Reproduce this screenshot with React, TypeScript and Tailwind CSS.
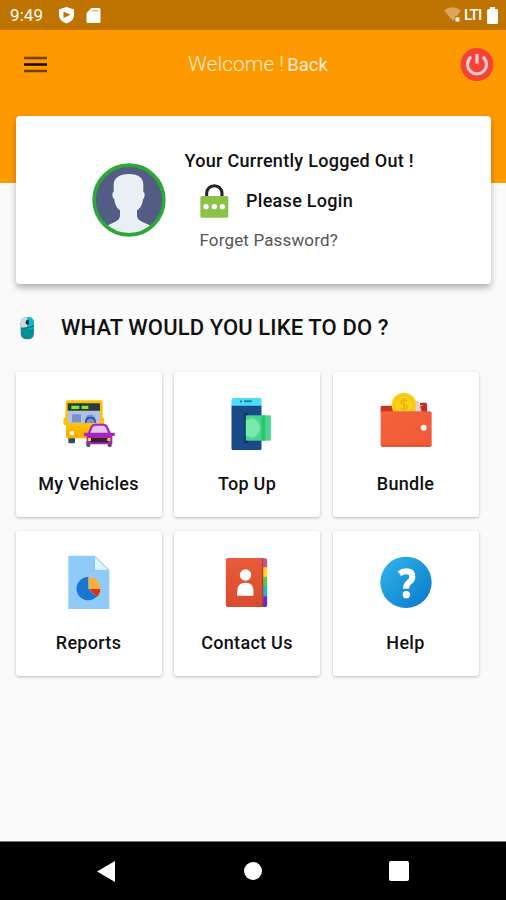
import type { ReactNode } from 'react'

function StatusBar() {
  return (
    <div className="flex h-[30px] items-center bg-[#bf7300] pl-[10px] pr-[8px] text-white">
      <span className="w-[48px] text-[17px] leading-none tracking-[0.100px]">9:49</span>
      <svg width="17" height="18" viewBox="0 0 17 18">
        <path d="M8.500 1 16 3.500v5.500c0 4-3 7-7.500 8.500C4 16 1 13 1 9V3.500z" fill="#fff" />
        <path d="M5.500 5.500v6.500l7-3.200z" fill="#bf7300" />
      </svg>
      <svg className="ml-[11px]" width="15" height="17" viewBox="0 0 15 17">
        <path d="M5.500 1H13q1.500 0 1.500 1.500v12Q14.500 16 13 16H2Q.5 16 .5 14.500V6z" fill="#fff" />
        <path d="M6 3h6v1.500H6z" fill="#d9b680" />
      </svg>
      <svg className="ml-auto" width="18" height="16" viewBox="0 0 18 16">
        <path d="M0 3.500Q8.500-3 17 3.500L9 14z" fill="#dba75c" />
        <path d="M11 9h6v7h-6z" fill="#bf7300" />
        <path d="M11.500 10.500h4v4h-4z" fill="#fff" />
      </svg>
      <span className="ml-[2px] w-[23px] text-[15px] font-medium leading-none tracking-[-0.700px]">LTI</span>
      <svg width="11" height="17" viewBox="0 0 11 17">
        <path d="M3 0h5v2h1.500Q11 2 11 3.500v12Q11 17 9.500 17h-8Q0 17 0 15.500v-12Q0 2 1.500 2H3z" fill="#fff" />
      </svg>
    </div>
  )
}

function Header() {
  return (
    <header className="flex h-[153px] items-start justify-between bg-[#ff9900] pl-[24px] pr-[12px] pt-[17px]">
      <svg className="mt-[9px]" width="23" height="17" viewBox="0 0 23 17">
        <path d="M0 2h23M0 15h23" stroke="#714300" strokeWidth="2.500" />
        <path d="M0 8.500h23" stroke="#120a00" strokeWidth="2.500" />
      </svg>
      <p className="ml-[9px] whitespace-nowrap text-[#ffedd9] leading-[35px]">
        <span className="text-[21px] font-light">Welcome ! </span>
        <span className="-ml-[2px] text-[18.500px]">Back</span>
      </p>
      <svg width="34" height="34" viewBox="0 0 34 34">
        <circle cx="17" cy="17.500" r="16.500" fill="#f44336" />
        <path d="M11.300 9.800a9.500 9.500 0 1 0 11.400 0" fill="none" stroke="#ffcdd2" strokeWidth="3" />
        <path d="M17 7v9.500" stroke="#ffcdd2" strokeWidth="3.200" />
      </svg>
    </header>
  )
}

function Avatar() {
  return (
    <svg width="74" height="74" viewBox="0 0 222 222">
      <circle cx="111" cy="111" r="104" fill="#525c85" />
      <path
        d="M111 33c30 0 43 12 43 34v20c6 1 5 17-1 22-2 18-8 27-18 33v14c0 15 12 20 35 29l8 4c-38 37-98 37-135 1l8-5c22-9 33-14 33-29v-14c-9-6-15-15-17-33-7-5-8-21-2-22V67c0-22 16-34 46-34z"
        fill="#e9eff5"
      />
      <circle cx="111" cy="111" r="104.500" fill="none" stroke="#2ba836" strokeWidth="11" />
    </svg>
  )
}

function LoginCard() {
  return (
    <section className="relative mx-[15.500px] -mt-[67px] flex h-[168px] rounded-[4px] bg-white shadow-[0_4px_6px_rgba(0,0,0,0.28)]">
      <div className="ml-[76.500px] mt-[46.500px]">
        <Avatar />
      </div>
      <div className="ml-[18.500px] mt-[33.500px] whitespace-nowrap">
        <p className="text-[18px] font-medium leading-[22px] tracking-[0.290px] text-[#111]">
          Your Currently Logged Out !
        </p>
        <div className="ml-[15px] mt-[12px] flex h-[35px] items-start">
          <svg width="30" height="35" viewBox="0 0 90 105">
            <path d="M20 42V28a23 23 0 0 1 46 0v14" fill="none" stroke="#23232b" strokeWidth="9" />
            <rect x="1" y="36" width="84" height="65" rx="5" fill="#8bc34a" />
            <circle cx="18" cy="68" r="8" fill="#fff" />
            <circle cx="43" cy="68" r="8" fill="#fff" />
            <circle cx="67" cy="68" r="8" fill="#fff" />
          </svg>
          <p className="ml-[16.500px] mt-[6px] text-[18px] font-medium leading-[22px] tracking-[0.290px] text-[#111]">
            Please Login
          </p>
        </div>
        <p className="ml-[15px] mt-[10.500px] text-[17px] leading-[22px] tracking-[0.150px] text-[#555]">Forget Password?</p>
      </div>
    </section>
  )
}

function Mouse() {
  return (
    <svg width="18" height="27" viewBox="0 0 54 81">
      <path d="M8 28Q8 9 28 9t20 19v29q0 19-20 19T8 57z" fill="#078f98" />
      <path d="M28 9q20 0 20 19v16H28z" fill="#00bcd4" />
      <path d="M28 9Q8 9 8 28v13h20z" fill="#cfd8dc" />
      <path d="M8 41q20 2 40-8v5Q30 46 8 43z" fill="#07727e" />
      <ellipse cx="28" cy="25" rx="5" ry="8" fill="#202c38" />
      <path d="m43 3 10 8" stroke="#e3f6f8" strokeWidth="4" />
    </svg>
  )
}

// icons share a 180 unit box, three units for each pixel
const vehicles = (
  <svg width="60" height="60" viewBox="57 29 180 180">
    <path d="M85 172h20v14q0 3-4 3H89q-4 0-4-3z" fill="#235262" />
    <path d="M83 60h99q6 0 6 7v106H83q-5 0-5-6v-33h-3q-5 0-5-6v-10q0-6 6-6l1-44q0-8 6-8zM187 112h5v21h-5z" fill="#ffc107" />
    <path d="M78 145h70v29H84q-6 0-6-6z" fill="#ffb300" />
    <path d="M83 69h97v22H83z" fill="#263c42" />
    <path d="M94 76h24v10H94zM125 76h20v10h-20z" fill="#76ef32" />
    <path d="M84 92h96v36H84z" fill="#b0c1ed" />
    <path d="M96 102h27v24H96z" fill="#7d91ca" />
    <path d="M136 128v-12q2-13 16-13t15 17v8" fill="#7d91ca" />
    <path d="M137 127q0-15 14-15t15 15" fill="none" stroke="#274cb4" strokeWidth="5" />
    <circle cx="96" cy="158" r="7" fill="#fffde0" />
    <path d="M139 183h12v13q0 4-6 4t-6-4zm64 0h12v13q0 4-6 4t-6-4z" fill="#465663" />
    <path d="M132 157h12l8-19q4-8 12-8h27q9 0 13 9l8 18h12v10h-7v25h-77v-25h-8z" fill="#a526ba" />
    <path d="m151 157 7-16q3-5 9-5h21q7 0 10 6l6 15z" fill="#e5c4f1" />
    <path d="M151 173h54v13h-54z" fill="#3a2032" />
    <path d="M144 173h9v9h-9zm58 0h9v9h-9z" fill="#ffca28" />
  </svg>
)

const topUp = (
  <svg width="60" height="60" viewBox="53.500 29 180 180">
    <path d="M97 74h90v130q0 6-6 6h-78q-6 0-6-6z" fill="#184b88" />
    <path d="M97 76V59q0-6 6-6h78q6 0 6 6v17z" fill="#4dddf8" />
    <path d="M123 60h5v7h-5zm12 0h23v6h-23z" fill="#237fa8" />
    <path d="M136 97h11v91h-11z" fill="#0d315f" />
    <path d="M140 105h75v76h-75z" fill="#48d68c" />
    <path d="M187 105h11v76h-11z" fill="#2fc276" />
    <path d="M140 118q12 0 18-4 23 5 25 29-2 23-25 29-6-4-18-4z" fill="#79e9ad" />
  </svg>
)

const bundle = (
  <svg width="60" height="60" viewBox="63 29 180 180">
    <defs>
      <linearGradient id="wallet" x1="0" y1="0" x2="1" y2="1">
        <stop stopColor="#f5613c" />
        <stop offset="1" stopColor="#ef5938" />
      </linearGradient>
    </defs>
    <path d="M77 94V80q0-4 5-4h126q7 0 7 7v14H77z" fill="#c9351f" />
    <path d="M171 61h20l9 35h-30z" fill="#cfd8dc" />
    <path d="M195 67h17q4 0 4 5v24h-14V75h-7z" fill="#c62828" />
    <circle cx="147" cy="74" r="37" fill="#fdd016" />
    <circle cx="147" cy="74" r="29" fill="none" stroke="#f7be10" strokeWidth="3" />
    <path d="M157 61q-17-6-19 3-1 6 9 9 13 3 9 10-5 7-19 1M147 54v37" fill="none" stroke="#e6b00c" strokeWidth="4" />
    <path d="M77 93h147q6 0 6 6v94q0 6-6 6H83q-6 0-6-6z" fill="url(#wallet)" />
    <path d="M77 193h153q0 6-6 6H83q-6 0-6-6z" fill="#e54d2f" />
    <circle cx="206" cy="142" r="9" fill="#fff8f2" />
  </svg>
)

const reports = (
  <svg width="60" height="60" viewBox="57 27 180 180">
    <path d="M85 47h80l43 43v119H85z" fill="#90caf9" />
    <path d="M165 51v38h38z" fill="#e1f5fe" />
    <path d="M145 146V111a35 35 0 1 0 25 59z" fill="#1976d2" />
    <path d="M146 147v-36a35 35 0 0 1 35 36z" fill="#fdae38" />
    <path d="M147 147h34q0 14-10 24z" fill="#dd3016" />
  </svg>
)

const contact = (
  <svg width="60" height="60" viewBox="53.500 27 180 180">
    <defs>
      <linearGradient id="book" x1="0" y1="0" x2="0" y2="1">
        <stop stopColor="#e95b39" />
        <stop offset="1" stopColor="#d84b2e" />
      </linearGradient>
    </defs>
    <path d="M188 55h11q5 0 5 5v23h-16z" fill="#cf4c91" />
    <path d="M188 82h16v28h-16z" fill="#fdd420" />
    <path d="M188 110h16v29h-16z" fill="#64c744" />
    <path d="M188 138h16v32h-16z" fill="#18b9dd" />
    <path d="M188 169h16v27q0 5-5 5h-11z" fill="#642ccb" />
    <rect x="80" y="54" width="112" height="147" rx="6" fill="url(#book)" />
    <path d="M188 54h4v147h-4z" fill="#b93d2c" />
    <circle cx="139" cy="105" r="17" fill="#fff" />
    <path d="M114 167v-12q0-27 25-27t24 27v12z" fill="#fff" />
  </svg>
)

const help = (
  <svg width="60" height="60" viewBox="63 27 180 180">
    <defs>
      <linearGradient id="help" x1="0" y1="0" x2="1" y2="1">
        <stop stopColor="#31b6ec" />
        <stop offset="1" stopColor="#0878c9" />
      </linearGradient>
    </defs>
    <circle cx="153" cy="127" r="77" fill="url(#help)" />
    <path d="M133 101q10-7 21-7 18 0 18 16 0 9-9 16-10 8-10 20" fill="none" stroke="#fff" strokeWidth="18" />
    <circle cx="154" cy="164" r="11" fill="#fff" />
  </svg>
)

function Tile({ label, children }: { label: string; children: ReactNode }) {
  return (
    <div className="flex h-[145px] flex-col items-center rounded-[3px] bg-white pt-[18px] shadow-[0_1px_3px_rgba(0,0,0,0.26)]">
      {children}
      <p className="mt-[23px] whitespace-nowrap text-[18px] font-medium leading-[22px] tracking-[0.290px] text-[#111]">
        {label}
      </p>
    </div>
  )
}

function NavBar() {
  return (
    <nav className="mt-auto flex h-[59px] items-center justify-between border-t border-[#777] bg-black px-[97px]">
      <svg width="18" height="21" viewBox="0 0 18 21">
        <path d="M18 0v21L0 10.500z" fill="#fff" />
      </svg>
      <div className="ml-[2px] h-[18px] w-[18px] rounded-full bg-white" />
      <div className="h-[20px] w-[20px] rounded-[2px] bg-white" />
    </nav>
  )
}

export default function App() {
  return (
    <div className="flex h-[900px] w-[506px] flex-col overflow-hidden bg-[#fafafa] font-['Roboto',sans-serif]">
      <StatusBar />
      <Header />
      <LoginCard />
      <div className="mt-[30px] flex h-[27px] items-center pl-[18px]">
        <Mouse />
        <h2 className="ml-[25px] whitespace-nowrap text-[22px] font-medium leading-[27px] tracking-[0.120px] text-[#111]">
          WHAT WOULD YOU LIKE TO DO ?
        </h2>
      </div>
      <main className="ml-[15.500px] mt-[31px] grid w-[463px] grid-cols-3 gap-x-[12.500px] gap-y-[14px]">
        <Tile label="My Vehicles">{vehicles}</Tile>
        <Tile label="Top Up">{topUp}</Tile>
        <Tile label="Bundle">{bundle}</Tile>
        <Tile label="Reports">{reports}</Tile>
        <Tile label="Contact Us">{contact}</Tile>
        <Tile label="Help">{help}</Tile>
      </main>
      <NavBar />
    </div>
  )
}
